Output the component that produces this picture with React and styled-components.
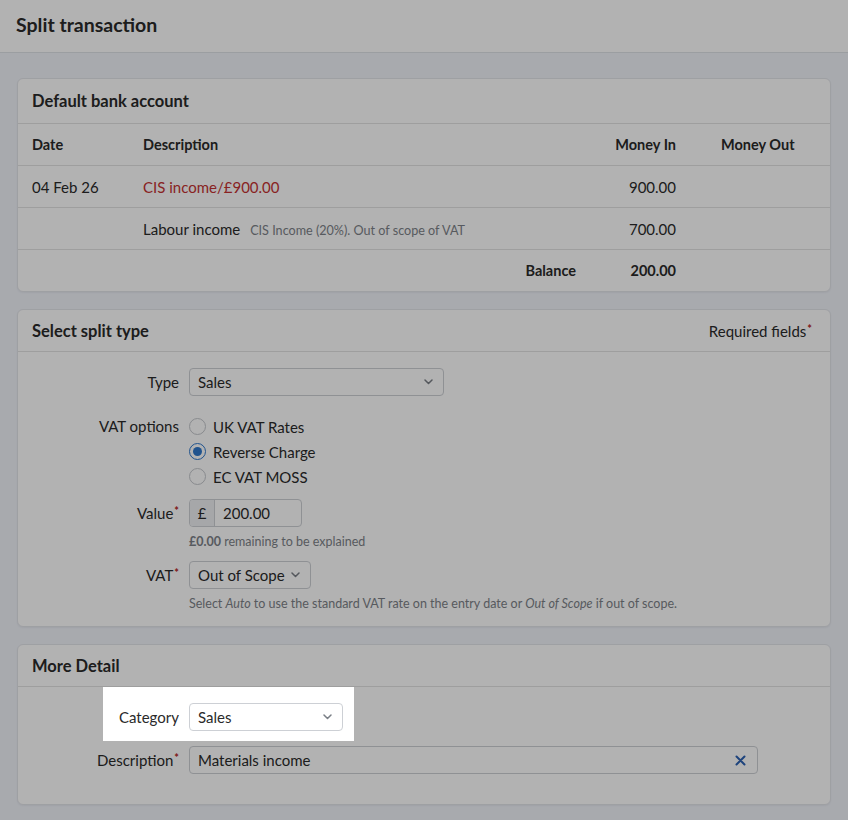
import React from 'react';
import styled, { createGlobalStyle } from 'styled-components';

const GlobalStyle = createGlobalStyle`
  html, body {
    margin: 0;
    background: #f1f4fa;
  }
  body {
    font-family: Lato, "Noto Sans", sans-serif;
    color: #2a2a2a;
    font-size: 15px;
  }
  * { box-sizing: border-box; }
`;

const TopBar = styled.header`
  height: 53px;
  background: #fff;
  border-bottom: 1px solid #dfe2e7;
  display: flex;
  align-items: center;
  padding: 0 16px 3px;
`;

const PageTitle = styled.h1`
  margin: 0;
  font-size: 19.5px;
  font-weight: 700;
`;

const Main = styled.main`
  display: flex;
  flex-direction: column;
  gap: 17px;
  padding: 25px 17px 16px;
`;

const Card = styled.section`
  background: #fff;
  border: 1px solid #e3e5ea;
  border-radius: 6px;
  box-shadow: 0 1px 2px rgba(30, 40, 60, 0.06);
`;

const CardHeader = styled.div`
  height: ${p => p.$h || 42}px;
  display: flex;
  align-items: center;
  justify-content: space-between;
  padding: 0 18px 0 14px;
  border-bottom: 1px solid #e2e2e2;
`;

const CardTitle = styled.h2`
  margin: 0;
  font-size: 16.5px;
  font-weight: 700;
`;

const Required = styled.span`
  font-size: 15px;
`;

const Star = styled.sup`
  color: #b52424;
  font-size: 11px;
  font-weight: 700;
  margin-left: 1px;
  vertical-align: 4px;
  line-height: 0;
`;

const Row = styled.div`
  display: grid;
  grid-template-columns: 111px 433px 100px 1fr;
  align-items: center;
  height: ${p => p.$h || 42}px;
  padding-left: 14px;
  border-bottom: ${p => (p.$last ? 'none' : '1px solid #e2e2e2')};
  font-weight: ${p => (p.$bold ? 700 : 400)};
  font-size: ${p => (p.$bold ? 14.5 : 15)}px;
`;

const Cell = styled.div`
  text-align: ${p => p.$align || 'left'};
  padding-left: ${p => p.$pl || 0}px;
  color: ${p => (p.$red ? '#c43232' : 'inherit')};
  white-space: nowrap;
`;

const Note = styled.span`
  font-size: 12.6px;
  color: #7d8288;
  margin-left: 10px;
`;

const FormBody = styled.div`
  padding: ${p => p.$pad};
`;

const FormRow = styled.div`
  position: relative;
  display: grid;
  grid-template-columns: 161px 1fr;
  column-gap: 10px;
  align-items: ${p => p.$top ? 'start' : 'center'};
  margin-top: ${p => p.$mt || 0}px;
`;

const Label = styled.label`
  text-align: right;
  line-height: ${p => p.$lh || 'normal'};
  white-space: nowrap;
`;

const Select = styled.div`
  width: ${p => p.$w}px;
  height: 28px;
  border: 1px solid #cdd0d5;
  border-radius: 4px;
  background: #fff;
  display: flex;
  align-items: center;
  justify-content: space-between;
  padding: 0 10px 0 8px;
`;

const Chevron = () => (
  <svg width="9" height="6" viewBox="0 0 9 6" fill="none">
    <path d="M1 1l3.5 3.5L8 1" stroke="#7a7f86" strokeWidth="1.5" strokeLinecap="round" strokeLinejoin="round" />
  </svg>
);

const RadioList = styled.div`
  display: flex;
  flex-direction: column;
`;

const RadioItem = styled.div`
  height: 25px;
  display: flex;
  align-items: center;
  gap: 7px;
`;

const RadioDot = styled.span`
  width: 17px;
  height: 17px;
  border-radius: 50%;
  border: 1px solid ${p => (p.$on ? '#2f78cc' : '#c4c7cc')};
  background: #fff;
  display: flex;
  align-items: center;
  justify-content: center;

  &::after {
    content: '';
    width: 9px;
    height: 9px;
    border-radius: 50%;
    background: ${p => (p.$on ? '#2f78cc' : 'transparent')};
  }
`;

const InputGroup = styled.div`
  display: flex;
  width: ${p => p.$w}px;
  height: 28px;
  border: 1px solid #cdd0d5;
  border-radius: 4px;
  overflow: hidden;
  background: #fff;
`;

const Addon = styled.span`
  width: 25px;
  background: #eef0f3;
  border-right: 1px solid #cdd0d5;
  display: flex;
  align-items: center;
  justify-content: center;
`;

const InputText = styled.span`
  flex: 1;
  display: flex;
  align-items: center;
  justify-content: space-between;
  padding: 0 ${p => p.$pr || 9}px 0 8px;
`;

const Help = styled.div`
  font-size: 12.5px;
  line-height: 15px;
  color: #7d8288;
  margin-top: 7px;

  b { font-weight: 700; }
`;

const Spotlight = styled.div`
  position: absolute;
  left: 85px;
  top: -16px;
  width: 251px;
  height: 54px;
  box-shadow: 0 0 0 3000px rgba(0, 0, 0, 0.3);
  pointer-events: none;
  z-index: 50;
`;

const ClearIcon = () => (
  <svg width="11" height="11" viewBox="0 0 11 11">
    <path d="M1.5 1.5l8 8M9.5 1.5l-8 8" stroke="#2c62b3" strokeWidth="2" strokeLinecap="round" />
  </svg>
);

export default function App() {
  return (
    <>
      <GlobalStyle />
      <TopBar>
        <PageTitle>Split transaction</PageTitle>
      </TopBar>
      <Main>
        <Card>
          <CardHeader $h={45}>
            <CardTitle>Default bank account</CardTitle>
          </CardHeader>
          <Row $bold $h={42}>
            <Cell>Date</Cell>
            <Cell>Description</Cell>
            <Cell $align="right">Money In</Cell>
            <Cell $pl={45}>Money Out</Cell>
          </Row>
          <Row>
            <Cell>04 Feb 26</Cell>
            <Cell $red>CIS income/£900.00</Cell>
            <Cell $align="right">900.00</Cell>
            <Cell />
          </Row>
          <Row>
            <Cell />
            <Cell>
              Labour income<Note>CIS Income (20%). Out of scope of VAT</Note>
            </Cell>
            <Cell $align="right">700.00</Cell>
            <Cell />
          </Row>
          <Row $bold $last $h={41}>
            <Cell />
            <Cell $align="right">Balance</Cell>
            <Cell $align="right">200.00</Cell>
            <Cell />
          </Row>
        </Card>

        <Card>
          <CardHeader>
            <CardTitle>Select split type</CardTitle>
            <Required>Required fields<Star>*</Star></Required>
          </CardHeader>
          <FormBody $pad="16px 0 15px">
            <FormRow>
              <Label>Type</Label>
              <Select $w={255}>Sales<Chevron /></Select>
            </FormRow>
            <FormRow $mt={18} $top>
              <Label $lh="25px">VAT options</Label>
              <RadioList>
                <RadioItem><RadioDot />UK VAT Rates</RadioItem>
                <RadioItem><RadioDot $on />Reverse Charge</RadioItem>
                <RadioItem><RadioDot />EC VAT MOSS</RadioItem>
              </RadioList>
            </FormRow>
            <FormRow $mt={10} $top>
              <Label $lh="28px">Value<Star>*</Star></Label>
              <div>
                <InputGroup $w={113}>
                  <Addon>£</Addon>
                  <InputText>200.00</InputText>
                </InputGroup>
                <Help><b>£0.00</b> remaining to be explained</Help>
              </div>
            </FormRow>
            <FormRow $mt={12} $top>
              <Label $lh="28px">VAT<Star>*</Star></Label>
              <div>
                <Select $w={122}>Out of Scope<Chevron /></Select>
                <Help>
                  Select <i>Auto</i> to use the standard VAT rate on the entry date or <i>Out of Scope</i> if out of scope.
                </Help>
              </div>
            </FormRow>
          </FormBody>
        </Card>

        <Card>
          <CardHeader>
            <CardTitle>More Detail</CardTitle>
          </CardHeader>
          <FormBody $pad="16px 0 30px">
            <FormRow>
              <Spotlight />
              <Label>Category</Label>
              <Select $w={154}>Sales<Chevron /></Select>
            </FormRow>
            <FormRow $mt={15}>
              <Label>Description<Star>*</Star></Label>
              <InputGroup $w={569}>
                <InputText $pr={11}>Materials income<ClearIcon /></InputText>
              </InputGroup>
            </FormRow>
          </FormBody>
        </Card>
      </Main>
    </>
  );
}
